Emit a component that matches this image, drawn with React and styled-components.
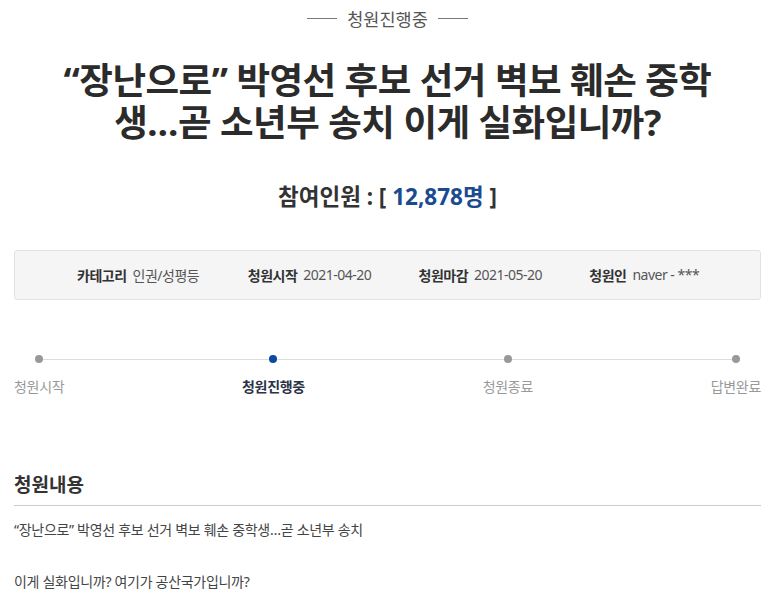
import React from "react";
import styled, { createGlobalStyle } from "styled-components";

const Global = createGlobalStyle`
  html, body { margin: 0; padding: 0; background: #fff; }
  body { font-family: "Noto Sans", "Noto Sans CJK KR", sans-serif; color: #333; }
  * { box-sizing: border-box; }
`;

const Page = styled.div`
  width: 747px;
  margin-left: 14px;
  padding-top: 6px;
`;

const Status = styled.div`
  display: flex;
  align-items: center;
  justify-content: center;
  gap: 10px;
  height: 24px;
  font-size: 17.5px;
  color: #555;
  &::before, &::after {
    content: "";
    width: 30px;
    height: 1px;
    background: #777;
  }
`;

const Title = styled.h1`
  margin: 29px 0 0;
  text-align: center;
  font-size: 36.5px;
  line-height: 42px;
  font-weight: 700;
  color: #2b2b2b;
  letter-spacing: -0.5px;
`;

const Count = styled.div`
  margin-top: 39px;
  text-align: center;
  font-size: 22.5px;
  line-height: 30px;
  font-weight: 700;
  color: #333;
`;

const Num = styled.span`
  color: #1b4b8f;
`;

const InfoBox = styled.div`
  margin-top: 38px;
  height: 50px;
  border: 1px solid #e2e2e2;
  border-radius: 3px;
  background: #f5f5f5;
  display: flex;
  align-items: center;
  padding-left: 62px;
`;

const InfoItem = styled.div`
  width: 172px;
  display: flex;
  gap: 6px;
  font-size: 14px;
  letter-spacing: -0.5px;
  white-space: nowrap;
`;

const InfoLabel = styled.b`
  font-weight: 700;
  color: #333;
`;

const InfoValue = styled.span`
  color: #555;
`;

const Steps = styled.div`
  position: relative;
  margin-top: 55px;
  display: flex;
  justify-content: space-between;
  &::before {
    content: "";
    position: absolute;
    left: 24px;
    right: 24px;
    top: 4px;
    height: 1px;
    background: #ddd;
  }
`;

const Step = styled.div`
  position: relative;
  display: flex;
  flex-direction: column;
  align-items: center;
  gap: 14px;
`;

const Dot = styled.span`
  width: 8px;
  height: 8px;
  border-radius: 50%;
  background: ${(p) => (p.$active ? "#0b4aa0" : "#999")};
`;

const StepLabel = styled.span`
  font-size: 14px;
  line-height: 20px;
  letter-spacing: -0.3px;
  color: ${(p) => (p.$active ? "#2a3347" : "#999")};
  font-weight: ${(p) => (p.$active ? 700 : 400)};
`;

const SectionTitle = styled.h2`
  margin: 75px 0 0;
  padding-bottom: 7px;
  border-bottom: 1px solid #ccc;
  font-size: 19px;
  line-height: 26px;
  font-weight: 700;
  color: #333;
`;

const Para = styled.p`
  margin: ${(p) => (p.$first ? "14px" : "32px")} 0 0;
  font-size: 14px;
  line-height: 20px;
  color: #444;
  letter-spacing: -0.3px;
`;

const steps = [
  { label: "청원시작" },
  { label: "청원진행중", active: true },
  { label: "청원종료" },
  { label: "답변완료" },
];

const info = [
  ["카테고리", "인권/성평등"],
  ["청원시작", "2021-04-20"],
  ["청원마감", "2021-05-20"],
  ["청원인", "naver - ***"],
];

export default function App() {
  return (
    <>
      <Global />
      <Page>
        <Status>청원진행중</Status>
        <Title>
          “장난으로” 박영선 후보 선거 벽보 훼손 중학
          <br />생…곧 소년부 송치 이게 실화입니까?
        </Title>
        <Count>
          참여인원 : [ <Num>12,878명</Num> ]
        </Count>
        <InfoBox>
          {info.map(([l, v]) => (
            <InfoItem key={l}>
              <InfoLabel>{l}</InfoLabel>
              <InfoValue>{v}</InfoValue>
            </InfoItem>
          ))}
        </InfoBox>
        <Steps>
          {steps.map((s) => (
            <Step key={s.label}>
              <Dot $active={s.active} />
              <StepLabel $active={s.active}>{s.label}</StepLabel>
            </Step>
          ))}
        </Steps>
        <SectionTitle>청원내용</SectionTitle>
        <Para $first>“장난으로” 박영선 후보 선거 벽보 훼손 중학생…곧 소년부 송치</Para>
        <Para>이게 실화입니까? 여기가 공산국가입니까?</Para>
      </Page>
    </>
  );
}
